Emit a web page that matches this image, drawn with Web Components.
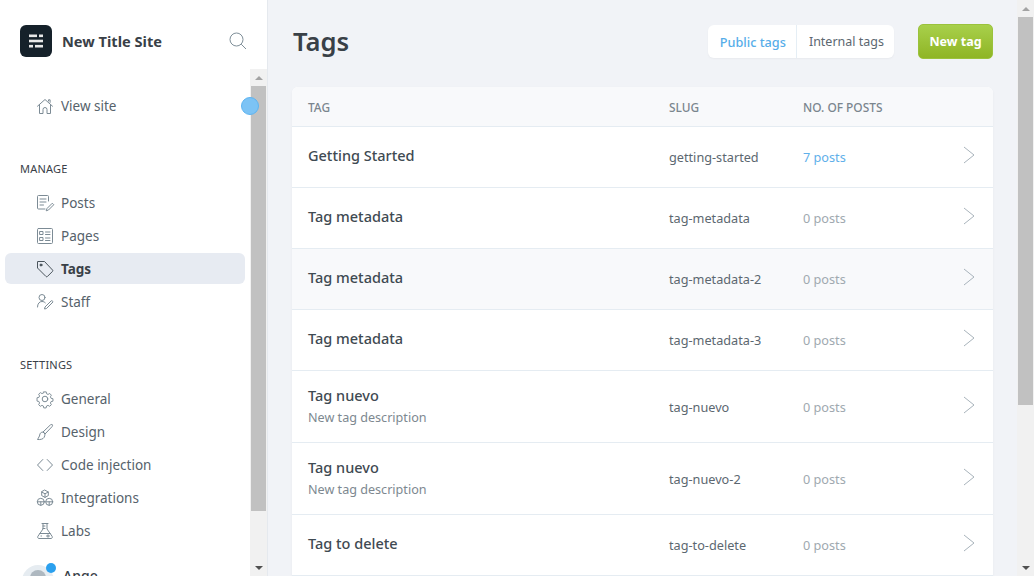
<!DOCTYPE html>
<html lang="en"><head><meta charset="utf-8"><title>Tags</title>
<style>
html,body{margin:0;height:100%;overflow:hidden}
body{font-family:"Noto Sans","Open Sans","Liberation Sans",sans-serif;color:#394047;background:#f1f3f7}
</style></head><body>
<template id="t-app"><style>
:host{display:flex;width:1034px;height:576px;overflow:hidden}
.main{flex:1;min-width:0;height:576px;overflow:hidden}
</style><slot name="side"></slot><div class="main"><slot></slot></div><slot name="bar"></slot></template>

<template id="t-scroll"><style>
:host{display:flex;flex-direction:column;flex:none;width:17px;background:#f1f1f1;align-items:center;box-sizing:border-box}
.btn{height:17px;flex:none;width:100%;display:flex;align-items:center;justify-content:center}
.thumb{width:15px;background:#c1c1c1;flex:none}
.track{flex:1;width:100%;display:flex;justify-content:center}
:host([kind=page]) .thumb{height:388px}
:host([kind=side]) .thumb{height:425px}
.up{width:0;height:0;border:4px solid transparent;border-top:0;border-bottom:4px solid #a3a3a3}
.dn{width:0;height:0;border:4px solid transparent;border-bottom:0;border-top:4px solid #505050}
</style><div class="btn"><i class="up"></i></div><div class="track"><div class="thumb"></div></div><div class="btn"><i class="dn"></i></div></template>

<template id="t-side"><style>
:host{display:flex;flex-direction:column;flex:none;width:268px;height:576px;background:#fff;border-right:1px solid #e5e9ee;box-sizing:border-box;overflow:hidden}
.top{height:69px;flex:none;display:flex;align-items:center;padding:13px 20px 0 20px;box-sizing:border-box}
.logo{width:32px;height:32px;border-radius:6px;background:#15212a;flex:none;display:flex;align-items:center;justify-content:center}
.name{margin-left:10px;font-size:14.6px;font-weight:700;color:#394047;flex:1;white-space:nowrap}
.search{display:block}
.body{flex:1;min-height:0;display:flex;position:relative}
.nav{flex:1;min-width:0;padding-top:21px;box-sizing:border-box;overflow:hidden}
.dot{position:absolute;left:241px;top:28px;width:18px;height:18px;border-radius:50%;background:#7cc3f5;border:1px solid #5db4f1;box-sizing:border-box}
</style>
<div class="top"><div class="logo"><svg width="16" height="16" viewBox="0 0 16 16" fill="#e8e8e8"><rect x="1" y="1.500" width="8" height="2.600"/><rect x="11" y="1.500" width="4" height="2.600"/><rect x="1" y="6.700" width="14" height="2.600"/><rect x="1" y="11.900" width="4" height="2.600"/><rect x="7" y="11.900" width="8" height="2.600"/></svg></div><div class="name">New Title Site</div>
<svg class="search" width="18" height="18" viewBox="0 0 18 18" fill="none" stroke="#7f8f99" stroke-width="1"><circle cx="7.500" cy="7.500" r="6.500"/><path d="M12.200 12.200L17 17"/></svg></div>
<div class="body"><div class="nav"><slot></slot></div><app-scrollbar kind="side"></app-scrollbar><div class="dot"></div></div></template>

<template id="t-nav"><style>
:host{display:flex;align-items:center;height:31px;margin:0 0 2px 5px;width:240px;padding-left:32px;box-sizing:border-box;border-radius:6px;font-size:13.5px;color:#56626b;gap:8px;white-space:nowrap}
:host([active]){background:#e7ebf2;font-weight:700;color:#394047}
::slotted(svg){width:16px;height:16px;flex:none;fill:none;stroke:#7c8b95;stroke-width:1;stroke-linecap:round;stroke-linejoin:round;overflow:visible}
:host([active]) ::slotted(svg){stroke:#4a545c}
</style><slot name="icon"></slot><slot></slot></template>

<template id="t-head"><style>
:host{display:block;height:16px;line-height:16px;margin:0 0 10px 20px;font-size:11px;letter-spacing:.2px;color:#394047;white-space:nowrap}
</style><slot></slot></template>

<template id="t-page"><style>
:host{display:block;padding:24px 24px 0 24px;box-sizing:border-box}
.head{display:flex;align-items:flex-start;height:36px;margin-bottom:27px}
h1{flex:1;margin:0;font-size:25.6px;font-weight:600;color:#394047;line-height:36px;padding-left:1px}
.tabs{display:flex;height:33px;margin-top:1px;background:#fff;border-radius:6px;box-shadow:0 1px 2px rgba(0,0,0,.04);font-size:12.5px;margin-right:24px;align-items:stretch}
.tab{display:flex;align-items:center;padding:0 10px 0 12px;color:#5c6770}
.tab.on{color:#56ade9;font-size:12.7px;font-weight:500;border-right:1px solid #e5eef5}
.btn{height:35px;width:75px;border-radius:5px;background:linear-gradient(#a8d04b,#8fb525);border:1px solid #9bc23c;box-sizing:border-box;color:#fff;font-weight:700;font-size:12.5px;display:flex;align-items:center;justify-content:center}
</style><div class="head"><h1>Tags</h1><div class="tabs"><div class="tab on">Public tags</div><div class="tab">Internal tags</div></div><div class="btn">New tag</div></div><slot></slot></template>

<template id="t-table"><style>
:host{display:block;background:#fff;border-radius:6px 6px 0 0;box-shadow:0 1px 3px rgba(0,0,0,.04);overflow:hidden}
.hd{display:grid;grid-template-columns:361px 134px 1fr;height:40px;box-sizing:border-box;padding-left:16px;align-items:center;background:#f8f9fb;border-bottom:1px solid #e5ecf2;font-size:11.9px;font-weight:500;color:#7a858e}
</style><div class="hd"><span>TAG</span><span>SLUG</span><span>NO. OF POSTS</span></div><slot></slot></template>

<template id="t-row"><style>
:host{display:grid;grid-template-columns:361px 134px 1fr 30px;box-sizing:border-box;padding-left:16px;align-items:center;border-bottom:1px solid #e5ecf2;height:61px;background:#fff}
:host([alt]){background:#f8f9fb}
:host([desc]){height:72px}
.t{font-size:14.5px;font-weight:500;color:#3f4a52;line-height:20px;margin-top:-5px}
:host([desc]) .t{margin-top:-3px}
.d{font-size:12.6px;color:#7d8890;line-height:17px;margin-top:4px;display:none}
:host([desc]) .d{display:block}
.s{font-size:12.7px;color:#5c6770}
.n{font-size:12.7px;color:#a0a9b0}
:host([live]) .n{color:#5fb0ea}
svg{display:block;margin-top:-4px}
</style><div><div class="t"><slot></slot></div><div class="d"><slot name="desc"></slot></div></div><div class="s"><slot name="slug"></slot></div><div class="n"><slot name="num"></slot></div>
<svg width="12" height="18" viewBox="0 0 12 18" fill="none" stroke="#a8b3bb" stroke-width="1"><path d="M1 1l10 8-10 8"/></svg></template>

<template id="t-user"><style>
:host{display:flex;align-items:flex-start;margin:19px 0 0 22px;position:relative;height:30px;gap:9px;font-size:14px;font-weight:500;color:#394047}
.a{width:32px;height:32px;border-radius:50%;background:#e6ecf1;position:relative;flex:none;overflow:hidden}
.a::after{content:"";position:absolute;left:8px;top:5px;width:16px;height:16px;border-radius:50%;background:#aeb8c0}
.b{position:absolute;left:24px;top:-2px;width:10px;height:10px;border-radius:50%;background:#2ba0ee;z-index:1}
.n{padding-top:1px}
</style><div class="a"></div><div class="b"></div><div class="n"><slot></slot></div></template>

<app-shell>
<app-side slot="side">
<nav-item><svg slot="icon" viewBox="0 0 16 16"><path d="M.5 8.200L8 1.500l7.500 6.700M2.500 6.700V15.500h3.500v-4a2 2 0 0 1 4 0v4h3.500V6.700M11.500 3V1.800h1.600v2.600"/></svg>View site</nav-item>
<div style="height:38px"></div>
<side-head>MANAGE</side-head>
<nav-item><svg slot="icon" viewBox="0 0 16 16"><path d="M11.500 6V1.500a1 1 0 0 0-1-1H1.500a1 1 0 0 0-1 1V13a1 1 0 0 0 1 1H8M3 4h6M3 7h6M3 10h3.500M15 8.500l-5 5-.8 2.300 2.300-.8 5-5z"/></svg>Posts</nav-item>
<nav-item><svg slot="icon" viewBox="0 0 16 16"><rect x=".5" y=".5" width="15" height="15" rx="1"/><rect x="3" y="3.500" width="3" height="3"/><rect x="3" y="9.500" width="3" height="3"/><path d="M8.500 4h4.500M8.500 6.500h4.500M8.500 10h4.500M8.500 12.500h4.500"/></svg>Pages</nav-item>
<nav-item active><svg slot="icon" viewBox="0 0 16 16"><path d="M1 .5H7.500L15.500 9a1 1 0 0 1 0 1.400L10.400 15.500a1 1 0 0 1-1.400 0L.5 7V1z"/><circle cx="4" cy="4" r="1" fill="#394047"/></svg>Tags</nav-item>
<nav-item><svg slot="icon" viewBox="0 0 16 16"><circle cx="5" cy="3.500" r="3"/><path d="M.5 13c0-3.500 2-5.500 4.500-5.500 1.500 0 2.500.5 3.300 1.300M15.500 8.500l-6 6-2 .5.500-2 6-6c.5-.5 1.300-.5 1.500 0s.5 1 0 1.500z"/></svg>Staff</nav-item>
<div style="height:38px"></div>
<side-head>SETTINGS</side-head>
<nav-item><svg slot="icon" viewBox="0 0 16 16"><circle cx="8" cy="8" r="2.800"/><path d="M6.700.5h2.600l.4 2 1.500.7 1.800-1 1.700 1.800-1 1.700.7 1.600 2 .4v2.600l-2 .4-.7 1.500 1 1.800-1.800 1.700-1.700-1-1.600.7-.4 2H6.700l-.4-2-1.500-.7-1.800 1-1.700-1.800 1-1.700-.7-1.600-2-.4V6.700l2-.4.7-1.500-1-1.800 1.800-1.700 1.700 1 1.600-.7z" transform="translate(.4 .4) scale(.95)"/></svg>General</nav-item>
<nav-item><svg slot="icon" viewBox="0 0 16 16"><path d="M15.200.8c-.6-.6-1.300-.3-2 .3L6 8l2 2 6.900-7.200c.6-.7.900-1.400.3-2zM6 8c-2.200 0-3 1.300-3.300 3-.2 1.300-1 2.500-2.200 4.500 3 .3 5.600-.4 6.500-2 .6-1 1-2.200 1-3.500z"/></svg>Design</nav-item>
<nav-item><svg slot="icon" viewBox="0 0 16 16"><path d="M5.800 2.500L.5 8l5.300 5.500M10.200 2.500L15.500 8l-5.300 5.500"/></svg>Code injection</nav-item>
<nav-item><svg slot="icon" viewBox="0 0 16 16"><path d="M8 .2l3.300 1.800v3.600L8 7.400 4.700 5.600V2zM4.700 2L8 3.800 11.300 2M8 3.800v3.600"/><circle cx="3.800" cy="11.800" r="3.500"/><circle cx="12.200" cy="11.800" r="3.500"/><path d="M.3 11.800h7M3.800 11.800v3.500M8.700 11.800h7M12.200 11.800v3.500"/></svg>Integrations</nav-item>
<nav-item><svg slot="icon" viewBox="0 0 16 16"><path d="M5 .5h6M6 .5v5.500L.9 13.300c-.6 1 0 2.200 1.100 2.200h12c1.100 0 1.700-1.200 1.100-2.200L10 6V.5M6 3h2M6 5.500h2M2.800 10.500h10.400M4 13h.5M9.500 13h3M11 11.700v2.600"/></svg>Labs</nav-item>
<user-chip>Ange</user-chip>
</app-side>
<tags-page>
<tag-table>
<tag-row live>Getting Started<span slot="slug">getting-started</span><span slot="num">7 posts</span></tag-row>
<tag-row>Tag metadata<span slot="slug">tag-metadata</span><span slot="num">0 posts</span></tag-row>
<tag-row alt>Tag metadata<span slot="slug">tag-metadata-2</span><span slot="num">0 posts</span></tag-row>
<tag-row>Tag metadata<span slot="slug">tag-metadata-3</span><span slot="num">0 posts</span></tag-row>
<tag-row desc>Tag nuevo<span slot="desc">New tag description</span><span slot="slug">tag-nuevo</span><span slot="num">0 posts</span></tag-row>
<tag-row desc>Tag nuevo<span slot="desc">New tag description</span><span slot="slug">tag-nuevo-2</span><span slot="num">0 posts</span></tag-row>
<tag-row>Tag to delete<span slot="slug">tag-to-delete</span><span slot="num">0 posts</span></tag-row>
</tag-table>
</tags-page>
<app-scrollbar slot="bar" kind="page"></app-scrollbar>
</app-shell>
<script>
const map={'app-shell':'t-app','app-scrollbar':'t-scroll','app-side':'t-side','nav-item':'t-nav','side-head':'t-head','tags-page':'t-page','tag-table':'t-table','tag-row':'t-row','user-chip':'t-user'};
for(const [n,id] of Object.entries(map)){
  customElements.define(n,class extends HTMLElement{constructor(){super();this.attachShadow({mode:'open'}).appendChild(document.getElementById(id).content.cloneNode(true));}});
}
</script>
</body></html>
